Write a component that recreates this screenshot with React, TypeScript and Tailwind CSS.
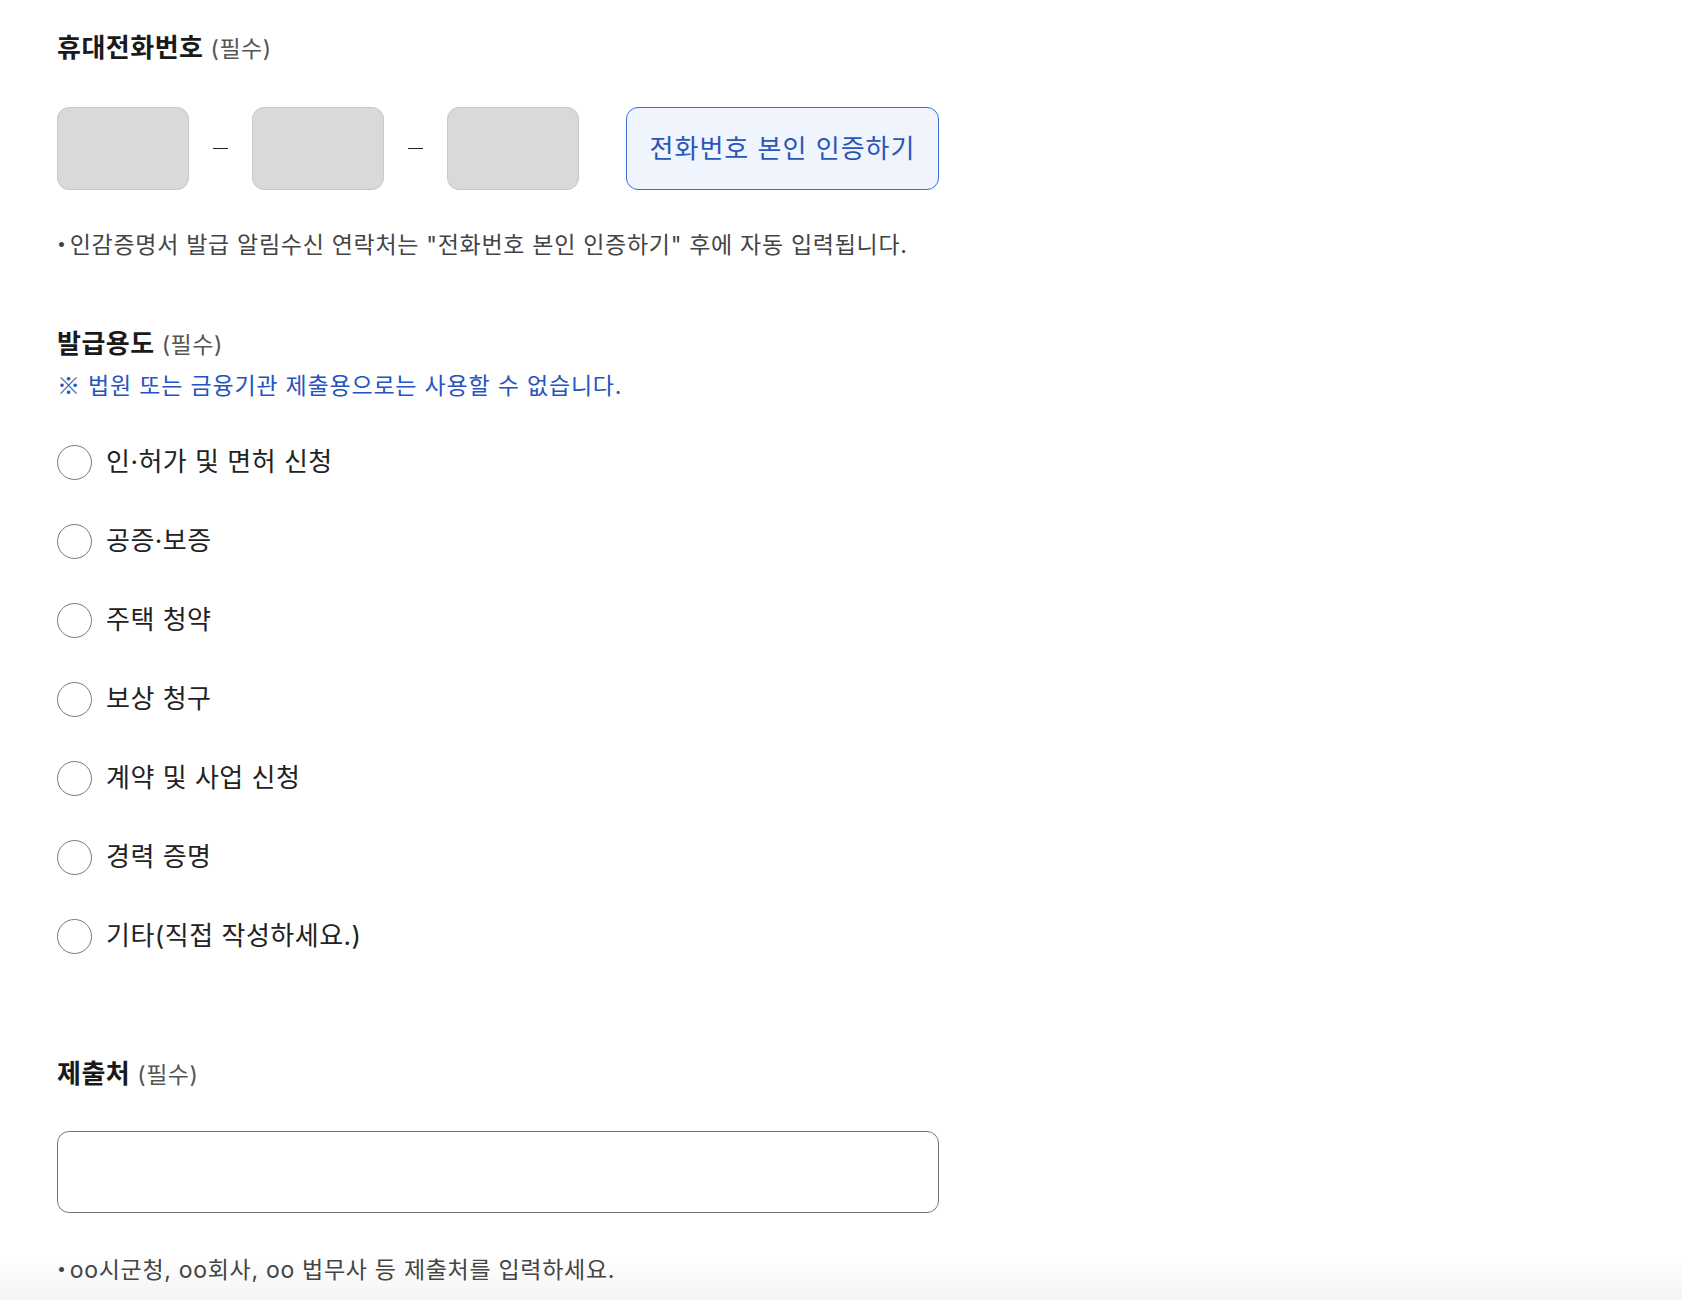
import React, { useState } from "react";

const purposes = [
  "인·허가 및 면허 신청",
  "공증·보증",
  "주택 청약",
  "보상 청구",
  "계약 및 사업 신청",
  "경력 증명",
  "기타(직접 작성하세요.)",
];

function Label({ title }: { title: string }) {
  return (
    <div className="flex items-baseline gap-[7px] leading-[32px]">
      <span className="text-[26px] font-bold tracking-[0.5px] text-[#1a1a1a]">{title}</span>
      <span className="text-[23px] tracking-[0.5px] text-[#555]">(필수)</span>
    </div>
  );
}

function Note({ children }: { children: React.ReactNode }) {
  return (
    <p className="flex items-center text-[23px] leading-[32px] tracking-[0.7px] text-[#444]">
      <span className="mr-[3px] -translate-y-[2px] text-[16px] leading-none">•</span>
      {children}
    </p>
  );
}

export default function App() {
  const [purpose, setPurpose] = useState("");
  const [place, setPlace] = useState("");

  return (
    <div className="min-h-[1300px] bg-[linear-gradient(to_bottom,#ffffff_1255px,#f4f4f4_1300px)] pl-[57px] pt-[32px] font-['Inter','Noto_Sans_CJK_KR',sans-serif]">
      <div className="w-[882px]">
        <Label title="휴대전화번호" />

        <div className="mt-[42px] flex items-center">
          <input className="h-[83px] w-[132px] rounded-[12px] border border-[#c8c8c8] bg-[#d9d9d9]" disabled />
          <span className="mx-[24px] h-[1.5px] w-[15px] bg-[#222]" />
          <input className="h-[83px] w-[132px] rounded-[12px] border border-[#c8c8c8] bg-[#d9d9d9]" disabled />
          <span className="mx-[24px] h-[1.5px] w-[15px] bg-[#222]" />
          <input className="h-[83px] w-[132px] rounded-[12px] border border-[#c8c8c8] bg-[#d9d9d9]" disabled />
          <button
            type="button"
            className="ml-[47px] h-[83px] w-[313px] rounded-[12px] border border-[#3d6fd9] bg-[#eff4fd] text-[26px] tracking-[1px] text-[#2a56b8]"
          >
            전화번호 본인 인증하기
          </button>
        </div>

        <div className="mt-[39px]">
          <Note>인감증명서 발급 알림수신 연락처는 "전화번호 본인 인증하기" 후에 자동 입력됩니다.</Note>
        </div>

        <div className="mt-[67px]">
          <Label title="발급용도" />
        </div>
        <p className="mt-[7px] text-[23px] leading-[32px] tracking-[0.8px] text-[#2553c2]">
          <span className="font-['Noto_Sans_CJK_KR',sans-serif]">※</span> 법원 또는 금융기관 제출용으로는 사용할 수 없습니다.
        </p>

        <div className="mt-[42px] flex flex-col gap-[43px]">
          {purposes.map((p) => (
            <label key={p} className="flex h-[36px] cursor-pointer items-center gap-[14px]">
              <input
                type="radio"
                name="purpose"
                checked={purpose === p}
                onChange={() => setPurpose(p)}
                className="h-[35px] w-[35px] appearance-none rounded-full border border-[#7a7a7a] bg-white checked:border-[10px] checked:border-[#2a56b8]"
              />
              <span className="text-[26px] leading-[32px] tracking-[0.5px] text-[#222]">{p}</span>
            </label>
          ))}
        </div>

        <div className="mt-[104px]">
          <Label title="제출처" />
        </div>
        <input
          value={place}
          onChange={(e) => setPlace(e.target.value)}
          className="mt-[40px] h-[82px] w-[882px] rounded-[12px] border border-[#777] bg-white px-5 text-[23px] outline-none"
        />
        <div className="mt-[41px]">
          <Note>oo시군청, oo회사, oo 법무사 등 제출처를 입력하세요.</Note>
        </div>
      </div>
    </div>
  );
}
